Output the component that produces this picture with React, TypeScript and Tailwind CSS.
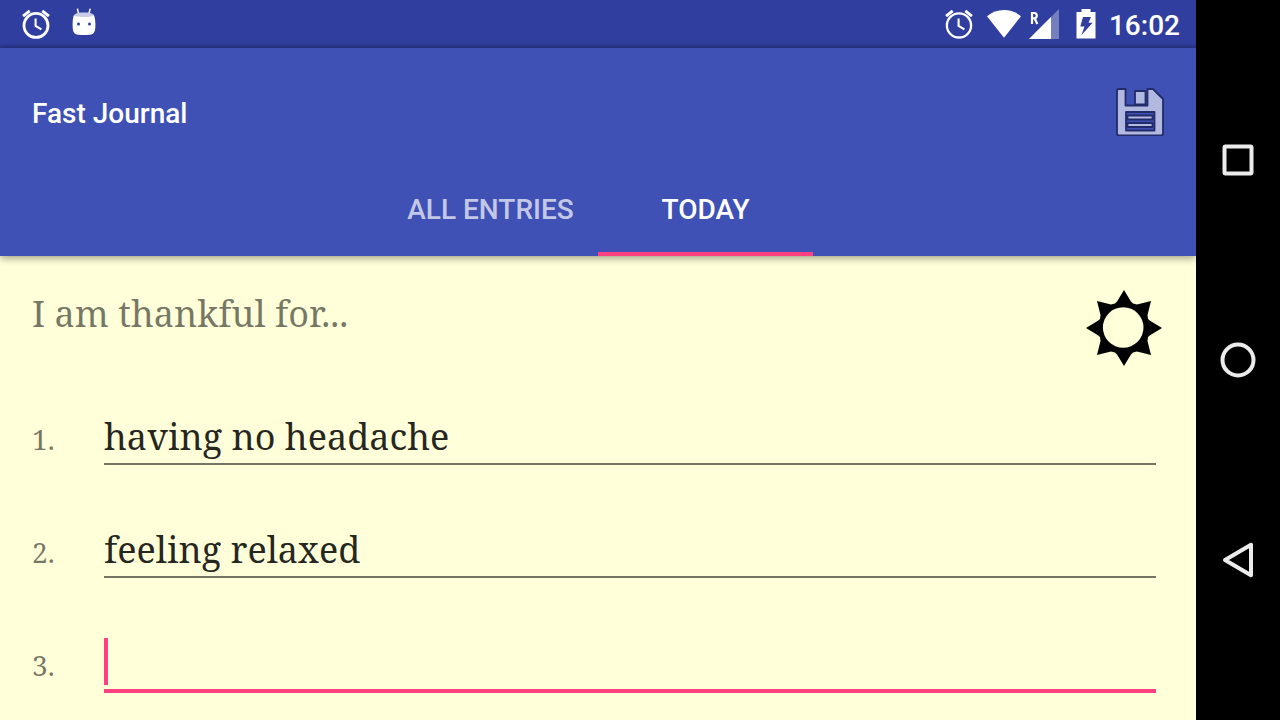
import { useState } from "react";

function AlarmIcon({ thin = false }: { thin?: boolean }) {
  return (
    <svg viewBox="0 0 34 34" className="size-[34px]" fill="none" stroke="#fff" aria-hidden="true">
      <circle cx="17" cy="18.4" r={thin ? 12.1 : 12} strokeWidth={thin ? 2.3 : 2.8} />
      <path d="M16.6 11.5v7.3l5.8 3.6" strokeWidth="2.1" />
      <path d="M10.7 3.8 4.1 9.2M23.3 3.8l6.6 5.4" strokeWidth="2.9" />
    </svg>
  );
}

function RobotIcon() {
  return (
    <svg viewBox="0 0 24 28" className="h-7 w-6" aria-hidden="true">
      <path d="m5.4.6 1.2 5.2M18.200.6l-1.300 5.200" stroke="#fff" strokeWidth="1.500" fill="none" />
      <path d="M2.500 6.500C4.500 4.800 8 4.500 12 4.500s7.500.3 9.500 2L22 9.500H2z" fill="#c9cdea" />
      <path
        d="M2 7c1.500 1.500 4 1.800 6 1.600 1.500.8 4 .4 5 .3 3 .4 7-.2 8.800-1.900 1 2 1.600 6 1.600 9.500 0 6-.8 8-2.600 9.200-1.500 1-5 1.300-8.800 1.300s-7.300-.3-8.800-1.300C1.400 24.500.6 22.500.6 16.500.6 13 1 9 2 7z"
        fill="#fff"
      />
      <circle cx="6.500" cy="16" r="1.500" fill="#303f9f" />
      <circle cx="17.500" cy="16" r="1.500" fill="#303f9f" />
    </svg>
  );
}

function WifiIcon() {
  return (
    <svg viewBox="0 0 34 28" className="h-7 w-[34px]" aria-hidden="true">
      <path d="M0 6.300C5 2.200 10.500.1 17 .1S29 2.200 34 6.300L17 27.800z" fill="#fff" />
    </svg>
  );
}

function SignalIcon() {
  return (
    <svg viewBox="0 0 30 30" className="size-[30px]" aria-hidden="true">
      <path d="M0 30 30 0v30z" fill="#757fbe" />
      <path d="M0 30 22 8V30z" fill="#fff" />
      <path
        d="M3 15V4h2.300c1.700 0 2.500.9 2.500 2.600S7 9.300 5.300 9.300H3M5.600 9.300 8.300 15"
        fill="none"
        stroke="#fff"
        strokeWidth="2.200"
      />
    </svg>
  );
}

function BatteryIcon() {
  return (
    <svg viewBox="0 0 20 30" className="h-[30px] w-5" aria-hidden="true">
      <path d="M5.500 0h9v3H19.500v26.500H0.500V3h5z" fill="#fff" />
      <path d="M7 8h8l-2.500 5.700h4.200L5.500 26l3-8.500H4.300z" fill="#303f9f" />
    </svg>
  );
}

function SaveIcon() {
  return (
    <svg viewBox="0 0 48 48" className="size-12" aria-hidden="true">
      <g stroke="#222c6b" strokeWidth="1.800" strokeLinejoin="round" fill="#b2b9e1">
        <path d="M3 1h6.500v16.500h22V1H37l10 10v34.500q0 2-2 2H3q-2 0-2-2V3q0-2 2-2z" />
        <path d="M19 3h10.500v13.500H19z" />
        <path d="M10 24h28.500v18.500H10z" fill="#3f51b5" />
        <path d="M11.500 27.500h25v4h-25zM11.500 35h25v4h-25z" />
      </g>
    </svg>
  );
}

function SunIcon() {
  return (
    <svg viewBox="0 0 76 76" className="size-[76px]" aria-hidden="true">
      <path
        fillRule="evenodd"
        d="M38 0 45 11.500 47 13.500 51 14.500 65 11 61.500 25 62 29 64.500 31 76 38 64.500 45 62 47 61.500 51 65 65 51 61.500 47 62.500 45 64.500 38 76 31 64.500 29 62.500 25 61.500 11 65 14.500 51 14 47 11.500 45 0 38 11.500 31 14 29 14.500 25 11 11 25 14.500 29 13.500 31 11.500zM37.200 17.200a20.300 20.300 0 1 0 0 40.600 20.300 20.300 0 1 0 0-40.600z"
        fill="#000"
      />
    </svg>
  );
}

const tabs = ["All entries", "Today"];

export default function App() {
  const [active, setActive] = useState("Today");
  const [entries, setEntries] = useState(["having no headache", "feeling relaxed", ""]);
  const [focused, setFocused] = useState(2);

  return (
    <div className="flex h-screen overflow-hidden bg-[#ffffd9] font-['Roboto',sans-serif]">
      <div className="flex min-w-0 flex-1 flex-col">
        <div className="flex h-12 shrink-0 items-center bg-[#303f9f] bg-linear-to-t from-[#283487] to-[#303f9f] to-10% pr-4 pl-[19px] text-white">
          <div className="flex items-center gap-[19px]">
            <AlarmIcon />
            <div className="pb-1">
              <RobotIcon />
            </div>
          </div>
          <div className="ml-auto flex items-center">
            <AlarmIcon thin />
            <div className="ml-[11px]">
              <WifiIcon />
            </div>
            <div className="ml-2">
              <SignalIcon />
            </div>
            <div className="ml-[17px]">
              <BatteryIcon />
            </div>
            <time className="ml-[13px] pt-1 text-[28px] leading-8 font-medium">16:02</time>
          </div>
        </div>

        <header className="relative shrink-0 bg-[#3f51b5] text-white shadow-[0_2px_8px_rgba(0,0,0,0.4)]">
          <div className="flex h-32 items-center justify-between px-8">
            <h1 className="pt-1 text-[28px] leading-8 font-medium">Fast Journal</h1>
            <button type="button" aria-label="Save">
              <SaveIcon />
            </button>
          </div>
          <nav className="flex h-20 justify-center" aria-label="Journal views">
            {tabs.map((tab) => (
              <button
                key={tab}
                type="button"
                onClick={() => setActive(tab)}
                className={
                  "w-[215px] border-b-4 pb-2 text-[28px] font-medium uppercase " +
                  (active === tab ? "border-[#ff4081] text-white" : "border-transparent text-white/70")
                }
              >
                {tab}
              </button>
            ))}
          </nav>
        </header>

        <main className="min-h-0 flex-1 pr-10 pl-8 font-['Noto_Serif','Droid_Serif','DejaVu_Serif',serif]">
          <div className="-mr-1.5 flex h-[155px] items-start justify-between pt-[34px]">
            <h2 className="text-[36px] leading-12 text-black/54">I am thankful for...</h2>
            <SunIcon />
          </div>
          <ol className="flex flex-col gap-[57px]">
            {entries.map((entry, i) => (
              <li key={i} className="flex h-14 items-baseline">
                <label htmlFor={`entry-${i}`} className="w-[72px] shrink-0 text-[28px] leading-12 text-black/54">
                  {i + 1}.
                </label>
                <div className="relative flex-1">
                  <input
                    id={`entry-${i}`}
                    value={entry}
                    onFocus={() => setFocused(i)}
                    onChange={(e) => setEntries(entries.map((v, n) => (n === i ? e.target.value : v)))}
                    className={
                      "box-content block h-12 w-full py-0.5 text-[36px] leading-12 text-black/87 caret-[#ff4081] outline-none " +
                      (focused === i ? "border-b-4 border-[#ff4081]" : "border-b-2 border-black/54")
                    }
                  />
                  {focused === i && entry === "" && (
                    <span className="pointer-events-none absolute top-px left-0 h-[47px] w-1 bg-[#ff4081]" />
                  )}
                </div>
              </li>
            ))}
          </ol>
        </main>
      </div>

      <nav className="flex w-[84px] shrink-0 flex-col items-center justify-around bg-black py-[60px]" aria-label="System">
        <button type="button" aria-label="Recent apps">
          <svg viewBox="0 0 40 40" className="size-10" fill="none" stroke="#ececec" strokeWidth="4">
            <rect x="6.500" y="6.500" width="27" height="27" rx="1" />
          </svg>
        </button>
        <button type="button" aria-label="Home">
          <svg viewBox="0 0 40 40" className="size-10" fill="none" stroke="#ececec" strokeWidth="4">
            <circle cx="20" cy="20" r="15.500" />
          </svg>
        </button>
        <button type="button" aria-label="Back">
          <svg viewBox="0 0 40 40" className="size-10" fill="none" stroke="#ececec" strokeWidth="4" strokeLinejoin="round">
            <path d="M33 4.800v30.400L7 20z" />
          </svg>
        </button>
      </nav>
    </div>
  );
}
